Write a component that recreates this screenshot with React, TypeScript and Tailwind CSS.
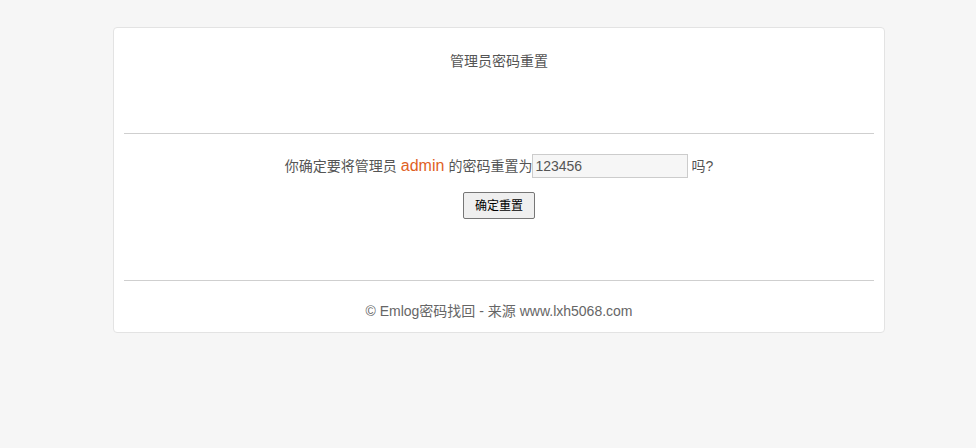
import React from "react";

export default function App() {
  return (
    <div
      className="min-h-[448px] w-full bg-[#f6f6f6] pt-[27px]"
      style={{ fontFamily: '"Liberation Sans", Arial, "Noto Sans CJK SC", sans-serif' }}
    >
      <div className="ml-[113px] w-[772px] rounded-[4px] border border-[#e3e3e3] bg-white px-[10px]">
        <div className="pt-[23px] pb-[62px] text-center text-[14px] leading-[20px] text-[#555]">
          管理员密码重置
        </div>
        <div className="h-px bg-[#cfcfcf]" />

        <div className="flex flex-col items-center pt-[20px] pb-[61px]">
          <div className="flex items-center text-[14px] text-[#555]">
            <span>你确定要将管理员</span>
            <span className="mx-[4px] text-[16px] text-[#e0611f]">admin</span>
            <span>的密码重置为</span>
            <input
              readOnly
              value="123456"
              className="h-[24px] w-[156px] border border-[#cccccc] bg-[#f6f6f6] px-[2px] text-[14px] text-[#555] outline-none"
            />
            <span className="ml-[3px]">吗?</span>
          </div>
          <button className="mt-[14px] h-[27px] w-[72px] rounded-[2px] border border-[#767676] bg-[#efefef] text-[12px] text-black">
            确定重置
          </button>
        </div>

        <div className="h-px bg-[#cfcfcf]" />
        <div className="pt-[20px] pb-[11px] text-center text-[14px] leading-[20px] text-[#666]">
          © Emlog密码找回 - 来源 www.lxh5068.com
        </div>
      </div>
    </div>
  );
}
